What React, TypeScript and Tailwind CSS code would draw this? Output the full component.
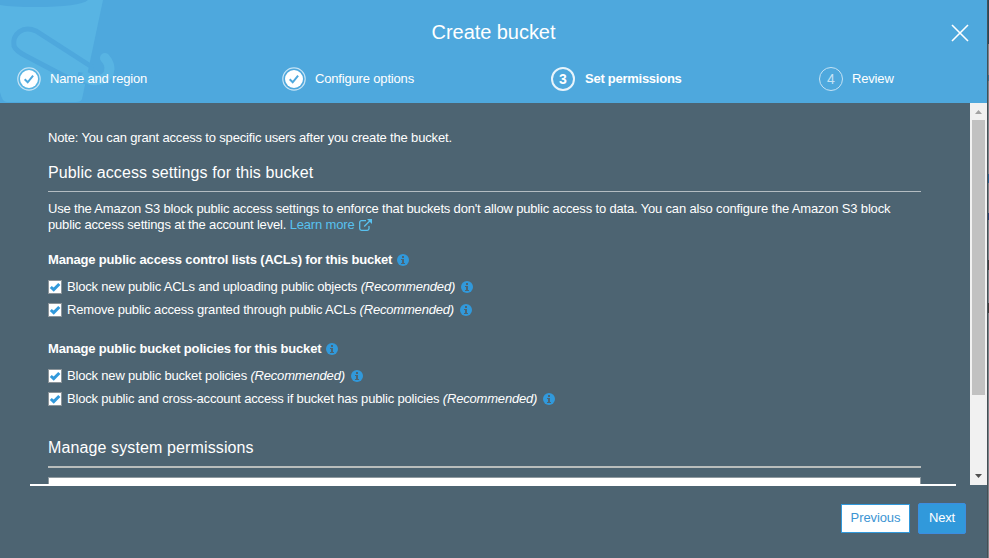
import type { ReactNode } from "react";

function Info({ className = "" }: { className?: string }) {
  return (
    <svg className={"block h-3 w-3 shrink-0 " + className} viewBox="0 0 12 12">
      <circle cx="6" cy="6" r="6" fill="#3199db" />
      <path d="M5 2h2v2H5zM4 5h3v4h1v1H4V9h1V6H4z" fill="#4d6472" />
    </svg>
  );
}

function Tick() {
  return (
    <svg className="block h-6 w-6 shrink-0" viewBox="0 0 24 24">
      <circle cx="12" cy="12" r="11.200" fill="none" stroke="#c5e3f5" strokeWidth="1.200" />
      <circle cx="12" cy="12" r="9" fill="#fff" />
      <path d="M7.700 12.300l3 3 5.400-6.600" fill="none" stroke="#4ea8dd" strokeWidth="2" />
    </svg>
  );
}

function NumberRing({ value, active }: { value: number; active?: boolean }) {
  return (
    <span
      className={
        "flex h-6 w-6 shrink-0 items-center justify-center rounded-full text-[14px] leading-none tracking-normal " +
        (active ? "border-2 border-[#e8f4fb] font-bold" : "border border-[#c5e3f5] text-[#c5e3f5]")
      }
    >
      {value}
    </span>
  );
}

function CheckRow({ label, children, className = "" }: { label: ReactNode; children?: ReactNode; className?: string }) {
  return (
    <div className={"flex h-[23px] items-center " + className}>
      <span className="mr-[5px] flex h-[14px] w-[14px] shrink-0 items-center justify-center border border-[#8c9499] bg-white">
        <svg className="h-3 w-3" viewBox="0 0 12 12">
          <path d="M1.800 6l2.900 2.600L10.300 3" fill="none" stroke="#3199db" strokeWidth="3" />
        </svg>
      </span>
      <span className="whitespace-pre tracking-[-0.18px]">
        {label} <i>(Recommended)</i>
      </span>
      {children}
    </div>
  );
}

export default function App() {
  return (
    <div className="flex h-[558px] w-[989px] overflow-hidden bg-[#4d6472] font-['Liberation_Sans',Arial,sans-serif] text-[13px] tracking-[-0.17px] text-white">
      <div className="flex w-[987px] flex-col">
        <header className="relative h-[103px] shrink-0 overflow-hidden bg-[#4ea8dd]">
          <svg className="absolute left-0 top-0" width="130" height="103" viewBox="0 0 130 103">
            <path d="M0 0H103L82 99Q81 102 76 102H7Q2 102 0 92Z" fill="#58b4e3" />
            <path d="M0 0H88Q80 7 35 7Q12 7 0 5Z" fill="#4ea8dd" />
            <path d="M92 67L36 31C23 25 12 34 14 46Q16 51 26 56L68 78L87 82" fill="none" stroke="#4ea8dd" strokeWidth="5" />
            <path d="M92 67L90 76L78 74" fill="none" stroke="#4ea8dd" strokeWidth="4" />
            <path d="M105 58C113 67 110 80 97 80Q91 81 86 77" fill="none" stroke="#58b4e3" strokeWidth="10" strokeLinecap="round" />
          </svg>
          <div className="relative flex h-[64px] items-center justify-center">
            <h1 className="text-[20px] tracking-[-0.05px]">Create bucket</h1>
            <svg className="absolute right-[17px] top-[23px]" width="20" height="20" viewBox="0 0 20 20">
              <path d="M2 2L18 18M18 2L2 18" stroke="#fff" strokeWidth="1.600" />
            </svg>
          </div>
          <div className="relative flex h-[30px] items-center pl-[17px]">
            <div className="flex w-[265px] items-center gap-[9px]"><Tick /><span>Name and region</span></div>
            <div className="flex w-[269px] items-center gap-[9px]"><Tick /><span>Configure options</span></div>
            <div className="flex w-[268px] items-center gap-[10px]"><NumberRing value={3} active /><b className="tracking-[-0.26px]">Set permissions</b></div>
            <div className="flex items-center gap-[9px]"><NumberRing value={4} /><span>Review</span></div>
          </div>
        </header>
        <div className="flex h-[382px] shrink-0">
          <main className="h-[382px] w-[970px] overflow-hidden pl-12 pr-[49px] pt-[27px]">
            <p className="h-[32px] leading-4">Note: You can grant access to specific users after you create the bucket.</p>
            <h2 className="h-[30px] border-b border-[#b4bdc2] text-[16px] leading-[21px] tracking-[0.1px]">Public access settings for this bucket</h2>
            <div className="h-[56px] whitespace-nowrap pt-[9px] leading-4">
              <p>Use the Amazon S3 block public access settings to enforce that buckets don't allow public access to data. You can also configure the Amazon S3 block</p>
              <p className="flex whitespace-pre">
                public access settings at the account level. <a className="text-[#58c1ef]">Learn more</a>
                <svg className="ml-[5px] mt-[2px]" width="13" height="12" viewBox="0 0 13 12" fill="none" stroke="#58c1ef" strokeWidth="1.300">
                  <path d="M7 1.700H2.500Q.7 1.700 .7 3.500V9.500Q.7 11.300 2.500 11.300H8.300Q10 11.300 10 9.500V7M5.200 7.500L11 1.700" />
                  <path d="M8 0H13V5Z" fill="#58c1ef" stroke="none" />
                </svg>
              </p>
            </div>
            <div className="flex h-[24px] items-center leading-4"><b>Manage public access control lists (ACLs) for this bucket</b><Info className="ml-[5px]" /></div>
            <CheckRow className="mt-[3px]" label="Block new public ACLs and uploading public objects"><Info className="ml-[6px]" /></CheckRow>
            <CheckRow label="Remove public access granted through public ACLs"><Info className="ml-[6px]" /></CheckRow>
            <div className="mt-[16px] flex h-[24px] items-center"><b>Manage public bucket policies for this bucket</b><Info className="ml-[5px]" /></div>
            <CheckRow className="mt-[3px]" label="Block new public bucket policies"><Info className="ml-[6px]" /></CheckRow>
            <CheckRow label="Block public and cross-account access if bucket has public policies"><Info className="ml-[6px]" /></CheckRow>
            <h2 className="mt-[27px] h-[31px] border-b-2 border-[#b9bdbc] text-[16px] leading-[21px] tracking-[0.12px]">Manage system permissions</h2>
            <div className="mt-[9px] h-10 border border-[#8e999f] bg-white" />
          </main>
          <div className="flex w-[17px] flex-col items-center bg-[#f1f1f1]">
            <svg width="17" height="17"><path d="M5 11L8.500 7L12 11Z" fill="#a3a3a3" /></svg>
            <div className="h-[275px] w-[13px] bg-[#c1c1c1]" />
            <svg className="mt-auto" width="17" height="17"><path d="M5 6H12L8.500 10Z" fill="#505050" /></svg>
          </div>
        </div>
        <footer className="relative flex flex-1 items-start justify-end gap-[8px] pr-[21px] pt-[18px]">
          <div className="absolute -top-px left-[30px] h-[2px] w-[926px] bg-white" />
          <button className="mt-px h-[29px] w-[69px] border border-[#3199db] bg-white pb-[2px] tracking-[-0.1px] text-[#3c94d3]">Previous</button>
          <button className="h-[31px] w-[48px] rounded-[2px] border border-[#3d8de0] bg-[#3199db] pb-[2px] text-white">Next</button>
        </footer>
      </div>
      <div className="flex w-[2px] flex-col border-l border-[#454e55] bg-[#7c8489]">
        <div className="h-[44px] bg-[#2b4656]" />
        <div className="mt-[31px] h-[6px] bg-[#3c6f8c]" />
        <div className="mt-[93px] h-[9px] bg-[#2c6390]" />
        <div className="mt-[30px] h-[7px] bg-[#2a4474]" />
        <div className="mt-[40px] h-[10px] bg-[#40403f]" />
        <div className="mt-[33px] h-[10px] bg-[#40403f]" />
      </div>
    </div>
  );
}
